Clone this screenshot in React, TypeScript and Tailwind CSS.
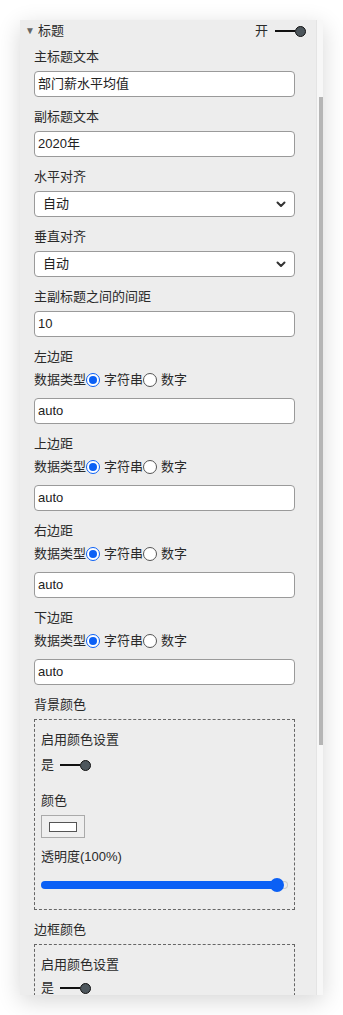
import React from "react";

const font = { fontFamily: "'Liberation Sans', 'Noto Sans CJK SC', sans-serif" };

function Toggle() {
  return (
    <span className="inline-flex items-center">
      <span className="block h-[2px] w-[20px] bg-[#111]" />
      <span className="block h-[11px] w-[11px] rounded-full border-[1.5px] border-[#111] bg-[#4d565c]" />
    </span>
  );
}

function Label({ children }: { children: React.ReactNode }) {
  return <div className="h-[20px] leading-[20px] text-[13px] text-[#2a2a2a]">{children}</div>;
}

function TextInput({ value, gap = "mt-[4px]" }: { value: string; gap?: string }) {
  return (
    <div className={`${gap} flex h-[26px] items-center rounded-[4px] border border-[#9a9a9a] bg-white px-[3px] text-[13px] text-[#222]`}>
      {value}
    </div>
  );
}

function Select({ value }: { value: string }) {
  return (
    <div className="mt-[4px] flex h-[26px] items-center justify-between rounded-[4px] border border-[#9a9a9a] bg-white pl-[8px] pr-[8px] text-[13px] text-[#222]">
      <span>{value}</span>
      <svg width="10" height="7" viewBox="0 0 10 7">
        <path d="M1.5 1.5 L5 5 L8.5 1.5" fill="none" stroke="#333" strokeWidth="2" strokeLinecap="round" strokeLinejoin="round" />
      </svg>
    </div>
  );
}

function Radio({ checked }: { checked: boolean }) {
  return checked ? (
    <span className="inline-flex h-[14px] w-[14px] items-center justify-center rounded-full border-[1.5px] border-[#0b60f5] bg-white">
      <span className="block h-[8px] w-[8px] rounded-full bg-[#0b60f5]" />
    </span>
  ) : (
    <span className="inline-block h-[14px] w-[14px] rounded-full border border-[#555] bg-white" />
  );
}

function MarginField({ label }: { label: string }) {
  return (
    <div className="mt-[10px]">
      <Label>{label}</Label>
      <div className="mt-[3px] flex h-[20px] items-center text-[13px] text-[#2a2a2a]">
        <span>数据类型</span>
        <Radio checked />
        <span className="ml-[4px]">字符串</span>
        <Radio checked={false} />
        <span className="ml-[4px]">数字</span>
      </div>
      <TextInput value="auto" gap="mt-[8px]" />
    </div>
  );
}

function ColorBox({ slider }: { slider: boolean }) {
  return (
    <div className="mt-[4px] border border-dashed border-[#666] px-[6px] pt-[10px] pb-[16px]">
      <Label>启用颜色设置</Label>
      <div className={`${slider ? "mt-[5px]" : "mt-[3px]"} flex h-[20px] items-center gap-[6px] text-[13px] text-[#2a2a2a]`}>
        <span>是</span>
        <Toggle />
      </div>
      {slider ? (
        <>
          <div className="mt-[16px]">
            <Label>颜色</Label>
          </div>
          <div className="mt-[4px] flex h-[23px] w-[44px] items-center justify-center border border-[#aaa] bg-[#efefef]">
            <span className="block h-[10px] w-[28px] border border-[#555] bg-white" />
          </div>
          <div className="mt-[9px]">
            <Label>透明度(100%)</Label>
          </div>
          <div className="relative mt-[10px] flex h-[16px] items-center">
            <div className="h-[8px] w-[240px] rounded-full bg-[#0b60f5]" />
            <div className="h-[8px] w-[8px] rounded-r-full border border-l-0 border-[#ccc]" />
            <div className="absolute left-[229px] top-[1px] h-[14px] w-[14px] rounded-full bg-[#0b60f5]" />
          </div>
        </>
      ) : (
        <div className="h-[40px]" />
      )}
    </div>
  );
}

export default function App() {
  return (
    <div className="min-h-[1015px] w-[343px] bg-white pl-[20px] pt-[20px]" style={font}>
      <div className="flex h-[975px] w-[303px] overflow-hidden bg-[#ededed] shadow-[0_6px_22px_rgba(0,0,0,0.16)]">
        <div className="flex-1 overflow-hidden">
          <div className="mt-[1px] flex h-[20px] items-center pl-[5px] pr-[10px] text-[13px] text-[#2a2a2a]">
            <span className="text-[10px] leading-none text-[#666]">▼</span>
            <span className="ml-[3px]">标题</span>
            <span className="ml-auto mr-[7px]">开</span>
            <Toggle />
          </div>
          <div className="pl-[14px] pr-[21px]">
            <div className="mt-[6px]">
              <Label>主标题文本</Label>
              <TextInput value="部门薪水平均值" />
            </div>
            <div className="mt-[10px]">
              <Label>副标题文本</Label>
              <TextInput value="2020年" />
            </div>
            <div className="mt-[10px]">
              <Label>水平对齐</Label>
              <Select value="自动" />
            </div>
            <div className="mt-[10px]">
              <Label>垂直对齐</Label>
              <Select value="自动" />
            </div>
            <div className="mt-[10px]">
              <Label>主副标题之间的间距</Label>
              <TextInput value="10" />
            </div>
            <MarginField label="左边距" />
            <MarginField label="上边距" />
            <MarginField label="右边距" />
            <MarginField label="下边距" />
            <div className="mt-[10px]">
              <Label>背景颜色</Label>
              <ColorBox slider />
            </div>
            <div className="mt-[10px]">
              <Label>边框颜色</Label>
              <ColorBox slider={false} />
            </div>
          </div>
        </div>
        <div className="w-[7px] border-l border-[#e4e4e4] bg-[#f7f7f7] pt-[77px]">
          <div className="ml-[2px] h-[648px] w-[4px] bg-[#b5b5b5]" />
        </div>
      </div>
    </div>
  );
}
